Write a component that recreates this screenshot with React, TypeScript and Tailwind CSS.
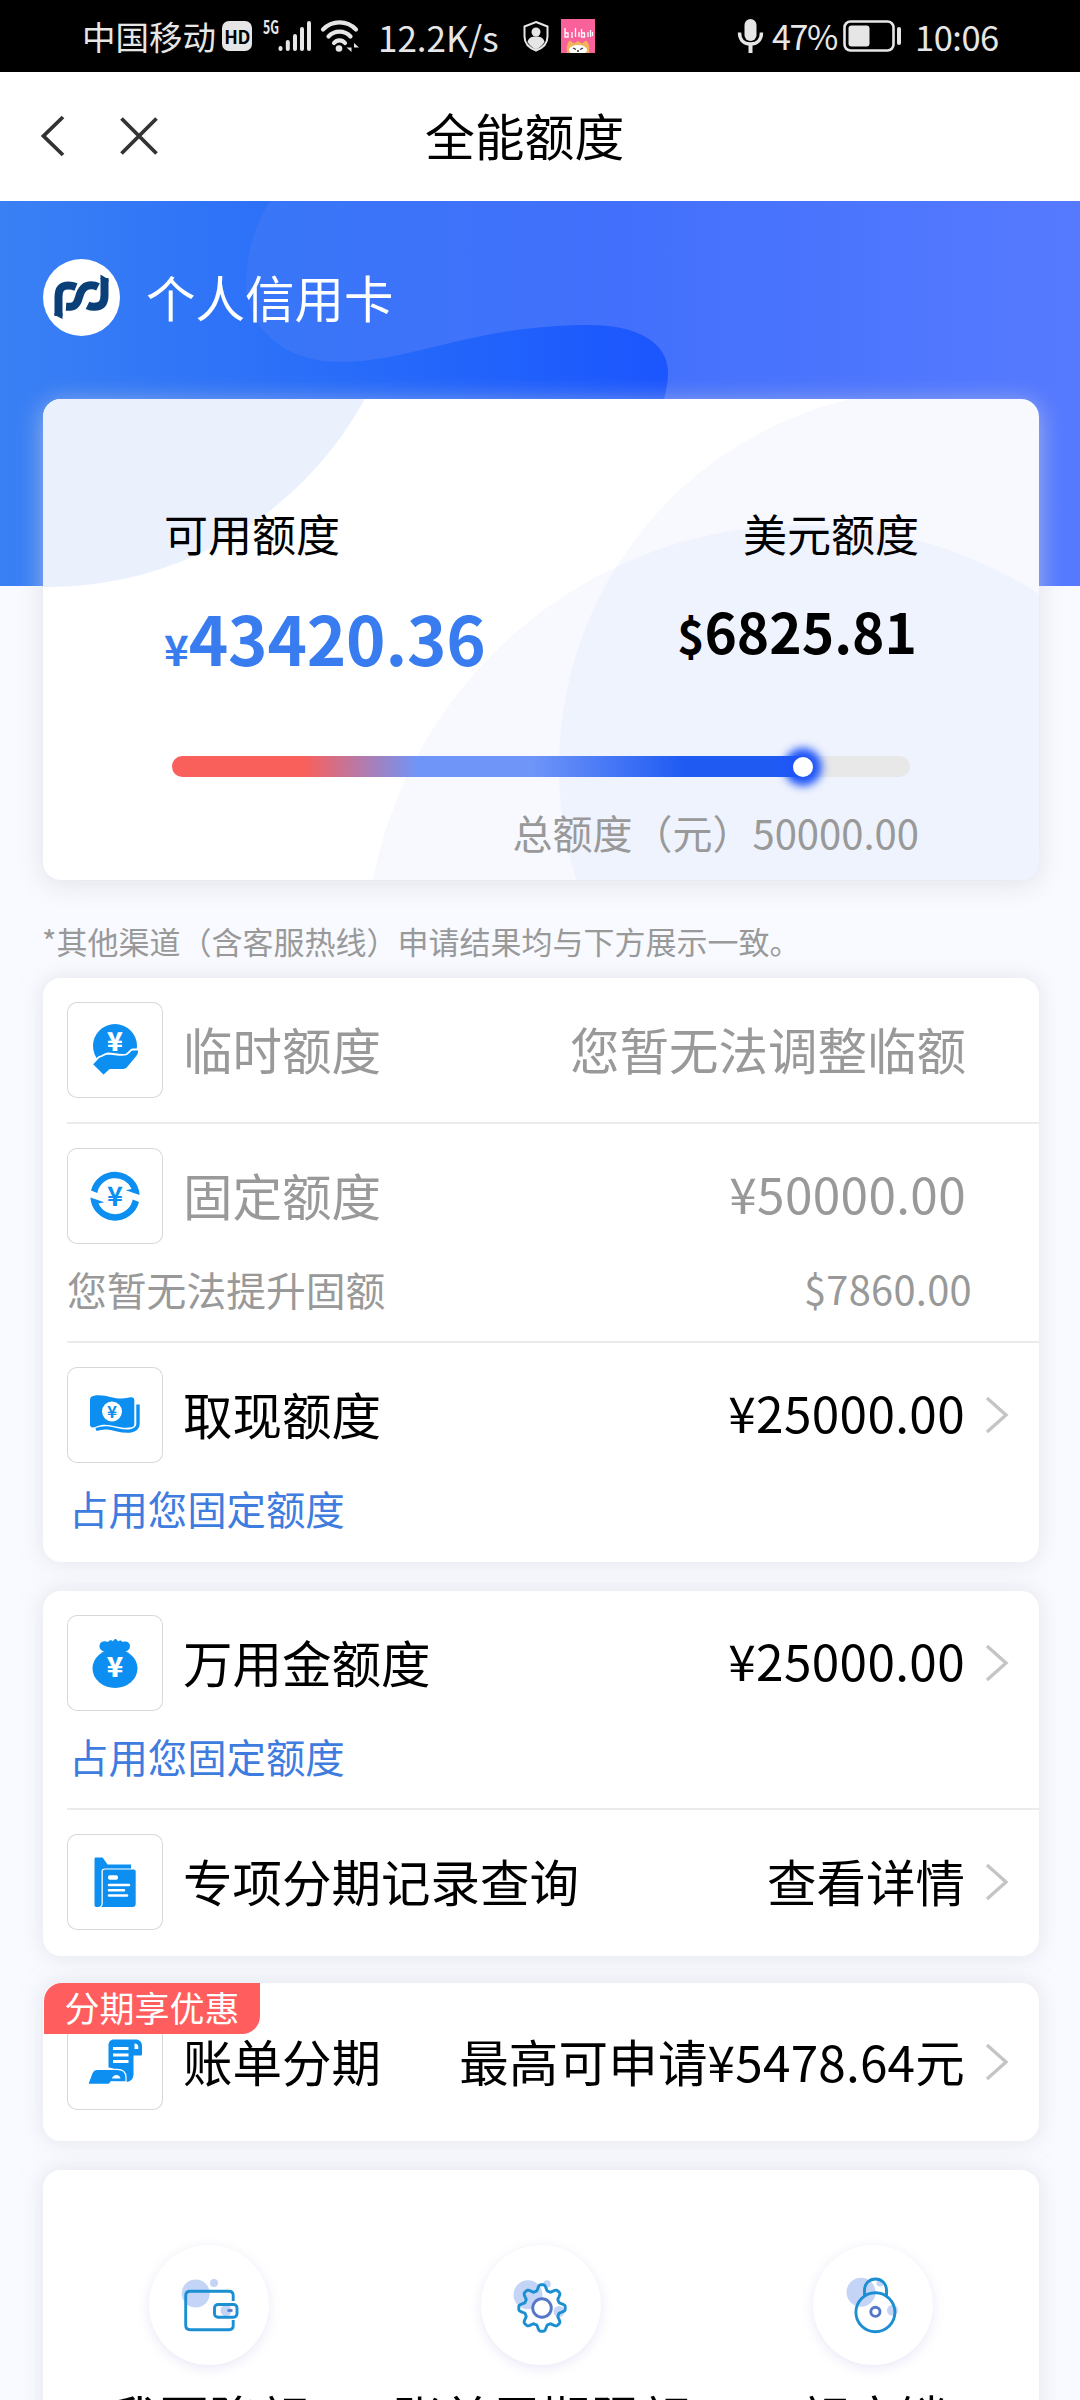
import React from 'react';

type Tone = 'muted' | 'normal';

interface RowProps {
  icon: React.ReactNode;
  label: string;
  value: string;
  tone?: Tone;
  arrow?: boolean;
  children?: React.ReactNode;
}

// --- Status bar ---
const StatusBar = () => (
  <div className="flex h-[72px] items-center bg-black text-[#e6e6e6]">
    <span className="ml-[82px] w-[137px] text-[33.5px] leading-none">中国移动</span>
    <span className="ml-[3px] flex h-[30px] w-[30px] items-center justify-center rounded-[7px] bg-[#e6e6e6] text-[18px] font-bold leading-none tracking-[-0.5px] text-black">
      HD
    </span>
    <svg className="ml-[10px]" width="100" height="36" viewBox="0 0 100 36" fill="none">
      <text x="1" y="16" fontSize="18" fontWeight="700" fill="#e6e6e6" textLength="16" lengthAdjust="spacingAndGlyphs">
        5G
      </text>
      <g stroke="#e6e6e6" strokeWidth="4" strokeLinecap="round">
        <path d="M18.5 31v-1M25.8 31v-7M33 31v-13M40 31V11M47 31V5" />
      </g>
      <g stroke="#e6e6e6" strokeWidth="4.2" strokeLinecap="round">
        <path d="M61 11.5c9-9.5 24-9.5 33 0M66.5 18.500c6-6.500 16-6.500 22 0M72 25c3-3.500 8-3.500 11 0" />
      </g>
      <circle cx="77" cy="30.5" r="3.3" fill="#e6e6e6" />
      <path d="M89.5 25v9l-5-4.500h5zM92 34v-9l5 4.500h-5z" fill="#e6e6e6" />
    </svg>
    <span className="ml-[16px] w-[122px] whitespace-nowrap text-[35px] leading-none">12.2K/s</span>
    <svg className="ml-[22px]" width="28" height="32" viewBox="0 0 28 32" fill="none">
      <path d="M14 2l11.5 4.5v10C25.5 23 21 28 14 30.5 7 28 2.5 23 2.5 16.5v-10z" stroke="#e6e6e6" strokeWidth="2" />
      <circle cx="14" cy="12" r="4.5" fill="#e6e6e6" />
      <path d="M5.5 22c1-4.500 4.500-5.500 8.500-5.500s7.500 1 8.500 5.500c-2 3.500-4.500 5.500-8.500 7.500-4-2-6.500-4-8.500-7.500z" fill="#e6e6e6" />
    </svg>
    <svg className="ml-[11px]" width="34" height="34" viewBox="0 0 34 34">
      <rect width="34" height="34" fill="#f9619b" />
      <path
        d="M4 9v9h3v-4H4M11 13v6M14.5 9v9M18 13v5M20.5 10v8h3v-4h-3M27 13v5M29.5 11v7M31.5 13v4"
        stroke="#fff"
        strokeWidth="1.3"
        fill="none"
      />
      <path d="M6 34c-1-6 0-10 3-12.500l4 3 4-2.500 4 2.500 4-3c3 2.500 4 6.500 3 12.500z" fill="#f3b45c" />
      <ellipse cx="17" cy="31" rx="9" ry="5" fill="#fff" />
      <path d="M12 29l3 1.5M22 29l-3 1.5M16 32h2" stroke="#333" strokeWidth="1.3" />
    </svg>
    <svg className="ml-[142px]" width="27" height="36" viewBox="0 0 27 36" fill="none">
      <rect x="7.5" y="1" width="12" height="22" rx="6" fill="#e6e6e6" />
      <path d="M2.5 14.5c0 8 5 11.500 11 11.500s11-3.500 11-11.500" stroke="#e6e6e6" strokeWidth="3.4" />
      <path d="M13.5 26v9" stroke="#e6e6e6" strokeWidth="4" />
    </svg>
    <span className="ml-[8px] w-[65px] whitespace-nowrap text-[34px] leading-none tracking-[-1.4px]">47%</span>
    <svg className="ml-[6px]" width="58" height="32" viewBox="0 0 58 32" fill="none">
      <rect x="1.5" y="1.5" width="49" height="29" rx="6" stroke="#e6e6e6" strokeWidth="2.6" />
      <rect x="5.5" y="5.5" width="21" height="21" rx="3" fill="#e6e6e6" />
      <rect x="54" y="7" width="4" height="18" rx="2" fill="#e6e6e6" />
    </svg>
    <span className="ml-[14px] whitespace-nowrap text-[34.5px] leading-none tracking-[-0.5px]">10:06</span>
  </div>
);

// --- Title bar ---
const TitleBar = () => (
  <div className="flex h-[129px] items-center bg-white pb-[2px]">
    <svg className="ml-[40px]" width="26" height="42" viewBox="0 0 26 42" fill="none">
      <path d="M23 2L3.5 21 23 40" stroke="#333" strokeWidth="3.8" />
    </svg>
    <svg className="ml-[53px]" width="40" height="40" viewBox="0 0 40 40" fill="none">
      <path d="M2.5 2.5l35 35M37.5 2.5l-35 35" stroke="#333" strokeWidth="3.8" />
    </svg>
    <h1 className="ml-[266px] pb-[2px] text-[49.8px] leading-none">全能额度</h1>
  </div>
);

const BankLogo = () => (
  <svg width="77" height="77" viewBox="0 0 77 77" fill="none">
    <circle cx="38.5" cy="38.5" r="38.5" fill="#fff" />
    <g stroke="#0b3f78" strokeWidth="8">
      <path d="M15.5 57V38c0-8 3-11.500 10-11.500 3.500 0 5 .5 7.500 1.500" />
      <path d="M23 47.800c8.500.5 11-2 13-9.500s5-12 12-12c3 0 5 .5 7 1.500" />
      <path d="M61.5 19v17c0 8-3 11.800-10 11.800-3 0-5-.5-7-1.500" />
    </g>
    <path d="M11.5 54v2l8 4v-6zM57.5 20v-4.5l8 5V23z" fill="#0b3f78" />
  </svg>
);

const Hero = () => (
  <div className="relative h-[385px] bg-linear-to-r from-[#3a80f4] via-[#1b55fe] via-62% to-[#1148ff]">
    <svg className="absolute inset-0" width="1080" height="385" viewBox="0 0 1080 385">
      <defs>
        <linearGradient id="blob" x1="246" y1="0" x2="1080" y2="0" gradientUnits="userSpaceOnUse">
          <stop offset="0" stopColor="#3876f7" />
          <stop offset="0.45" stopColor="#4270fc" />
          <stop offset="1" stopColor="#567aff" />
        </linearGradient>
      </defs>
      <path
        d="M270 0C252 28 246 58 246 84C248 128 285 161 341 161C410 161 475 124 589 124C638 124 668 142 668 171C668 185 665 192 663 205L640 385H1080V0Z"
        fill="url(#blob)"
      />
    </svg>
    <div className="relative flex items-center gap-[26px] pl-[43px] pt-[58px] text-white">
      <BankLogo />
      <span className="pb-[2px] text-[49.5px] leading-none">个人信用卡</span>
    </div>
  </div>
);

// --- Available credit card ---
const CreditCard = () => {
  const total = 50000;
  const available = 43420.36;
  const fill = (available / total) * 98.5;

  return (
    <div className="relative ml-[43px] -mt-[187px] h-[481px] w-[996px] rounded-[18px] bg-white shadow-[0_4px_26px_rgba(212,214,220,0.65)]">
      <svg className="absolute inset-0 rounded-[18px]" width="996" height="481" viewBox="43 399 996 481">
        <circle cx="48" cy="226" r="361" fill="#eaf1fd" />
        <circle cx="803" cy="963" r="438" fill="#4a70f0" fillOpacity="0.045" />
        <circle cx="937" cy="767" r="378" fill="#4a70f0" fillOpacity="0.045" />
      </svg>
      <div className="relative pl-[121px] pr-[120px]">
        <div className="flex justify-between pt-[110px] text-[44px] leading-[48px]">
          <span>可用额度</span>
          <span>美元额度</span>
        </div>
        <div className="mt-[32px] flex h-[80px] items-start justify-between font-bold">
          <div className="flex items-baseline pt-[14px] text-[#387cf0]">
            <span className="text-[42px] leading-none">¥</span>
            <span className="text-[67px] leading-none tracking-[-0.2px]">43420.36</span>
          </div>
          <div className="flex items-baseline pr-[2px] pt-[14px]">
            <span className="text-[46px] leading-none">$</span>
            <span className="text-[55px] leading-none">6825.81</span>
          </div>
        </div>
        <div className="ml-[8px] mt-[87px] flex h-[21px] w-[738px] items-center rounded-full bg-[#e8e8e8]">
          <div
            className="flex h-[21px] items-center justify-end rounded-l-full bg-[linear-gradient(90deg,#f9605c_0%,#f9605c_21%,#6f95f8_39%,#6f95f8_57%,#1f5bf3_81%,#1f5bf3_100%)]"
            style={{ width: `${fill}%` }}
          >
            <span className="-mr-[10px] h-[20px] w-[20px] shrink-0 rounded-full bg-white shadow-[0_0_9px_9px_#1f55f8]" />
          </div>
        </div>
        <div className="mt-[33px] text-right text-[40px] leading-[44px] text-[#999]">总额度（元）50000.00</div>
      </div>
    </div>
  );
};

// --- Row icons ---
const BLUE = '#0c8ff0';

const HandIcon = () => (
  <svg width="96" height="96" viewBox="0 0 96 96">
    <circle cx="48" cy="44" r="22" fill={BLUE} />
    <text x="48" y="48.5" fontSize="26" fontWeight="900" fill="#fff" textAnchor="middle">¥</text>
    <path
      d="M24.5 62c3-1 4.500-5 7.500-7 3-.5 5-3 9-3.500 6 0 12 2.500 18 1 3-1.500 4-4.500 6.500-5h6.500c.5 3-.5 5-2 7L60 66.500c-1 1-2 1.300-3.500 1.300H43L36.500 74z"
      fill={BLUE}
      stroke="#fff"
      strokeWidth="1.8"
    />
  </svg>
);

const CycleIcon = () => {
  const half = 'M24 42.4A24.7 24.7 0 0 1 72.6 47L58.8 42.2l5.7-1.2A18 18 0 0 0 30.3 45z';
  return (
    <svg width="96" height="96" viewBox="0 0 96 96" fill={BLUE}>
      <path d={half} />
      <path d={half} transform="rotate(180 48 48.2)" />
      <text x="48" y="57.5" fontSize="27" fontWeight="700" textAnchor="middle">¥</text>
    </svg>
  );
};

const CashIcon = () => (
  <svg width="96" height="96" viewBox="0 0 96 96" fill="none">
    <path
      d="M23 33c0-3 1.500-4 4-4.300 11-2 19 3.500 28 2.800 4 0 8-2 10.500-1 1.500.5 1.800 1.500 1.800 3V57c0 2-1 3-3 3.300-12 2-20-4-30-2.300-4 .7-7 3-9.500 2.300-1.500-.5-1.800-1.500-1.800-3z"
      fill={BLUE}
    />
    <circle cx="45" cy="44.5" r="10" fill="#fff" />
    <text x="45" y="50.5" fontSize="17" fontWeight="700" fill={BLUE} textAnchor="middle">¥</text>
    <path d="M29 62.500c14-5 22 3 34 1.500 5-1 8-2.500 8-7V37.500" stroke={BLUE} strokeWidth="3.4" />
  </svg>
);

const BagIcon = () => (
  <svg width="96" height="96" viewBox="0 0 96 96" fill={BLUE}>
    <path d="M40 37c-5 0-8-3-7.500-6.500.5-4 5-5 8.500-3.500 1.500-2.500 4-2 5-.5 1-3.500 4-3.500 5 0 1.500-1.500 3.500-1.500 4.500.5 4-1.500 7.500.5 7.500 4S60 37 56 37l-3 4H43z" />
    <ellipse cx="48" cy="53.5" rx="22.5" ry="19.5" />
    <text x="48" y="62" fontSize="27" fontWeight="900" fill="#fff" textAnchor="middle">¥</text>
  </svg>
);

const FolderIcon = () => (
  <svg width="96" height="96" viewBox="0 0 96 96" fill={BLUE}>
    <path d="M27.5 25c0-1 .5-1.500 1.500-1.500h5.500c1 0 1.500.5 2 1.200l4 5.800H64v4H38c-2.500 0-3.500 1-3.500 3V70c0 1.500-1.500 3-3.500 3h-1.500c-1.300 0-2-.7-2-2z" />
    <path d="M38 35.500h28.500c1.500 0 2.200.7 2.200 2v32c0 2.500-1 3.500-3.200 3.500H34c1.300-1 1.800-2 1.800-4V37.500c0-1.300.7-2 2.200-2z" />
    <rect x="41" y="41.3" width="10" height="4.4" rx="1.8" fill="#fff" />
    <path d="M42 51h20M42 56.300h15M42 61.500h18" stroke="#fff" strokeWidth="2.6" strokeLinecap="round" />
  </svg>
);

const ScrollIcon = () => (
  <svg width="96" height="96" viewBox="0 0 96 96" fill={BLUE}>
    <path d="M47 25.500h21.500c4 0 6.500 2.500 6.500 6.500V40c0 1-.5 1.500-1.500 1.500H66.500V60c0 5-3 8-8 8h-9l1-6c-1-5-3-8-9-8.500V31.500c0-3.500 2-6 5.500-6z" />
    <path d="M67.5 29.500c2.500 0 3.800 1.300 3.800 3.500v2h-3.800z" fill="#fff" />
    <path d="M46 34.500h15.500M46 41h15.500M46 47.500h15.500" stroke="#fff" strokeWidth="3" />
    <path d="M21.2 69l3.600-9.500c1-3 2.700-4.200 5.500-4.200H50c6 0 9 3 9 8v4.500H44l-1 1.500c-.5.7-1 1-2 1H22c-.8 0-1-.5-.8-1.300z" stroke="#fff" strokeWidth="1.2" />
    <path d="M45 64.500c1-4 7-5 8.500 0z" fill="#fff" />
  </svg>
);

const Chevron = () => (
  <svg className="ml-[20px] mr-[30px]" width="24" height="40" viewBox="0 0 24 40" fill="none">
    <path d="M2 3l19 17L2 37" stroke="#c5c5c8" strokeWidth="3.4" />
  </svg>
);

const Panel = ({ children, className = '' }: { children: React.ReactNode; className?: string }) => (
  <section
    className={`relative ml-[43px] w-[996px] rounded-[18px] bg-white shadow-[0_0_20px_rgba(205,207,213,0.5)] ${className}`}
  >
    {children}
  </section>
);

const Row = ({ icon, label, value, tone = 'normal', arrow = false, children }: RowProps) => (
  <div className={tone === 'muted' ? 'pl-[24px] pt-[24px] text-[#999]' : 'pl-[24px] pt-[24px] text-black'}>
    <div className="flex h-[96px] items-center">
      <div className="h-[96px] w-[96px] shrink-0 overflow-hidden rounded-[10px] shadow-[inset_0_0_0_1px_#d8d8d8]">{icon}</div>
      <span className="ml-[20px] whitespace-nowrap pb-[3px] text-[49.5px] leading-none">{label}</span>
      <span
        className={`ml-auto whitespace-nowrap text-[49.5px] leading-none ${
          value.startsWith('¥') ? 'pb-[6px] tracking-[0.35px]' : 'pb-[3px]'
        } ${value.endsWith('元') ? 'tracking-[0.2px]' : ''} ${arrow ? '' : 'mr-[73px]'}`}
      >
        {value}
      </span>
      {arrow && <Chevron />}
    </div>
    {children}
  </div>
);

const Divider = () => <div className="ml-[24px] h-[2px] bg-[#ebebeb]" />;

const OccupyNote = () => (
  <div className="ml-[2px] flex h-[97px] items-center pb-[7px] text-[39.4px] leading-none text-[#3f7cdf]">占用您固定额度</div>
);

// --- Bottom shortcuts ---
const LINE = '#1b8fd2';
const HAZE = '#c3d4f7';

const gearPath = () => {
  const points: string[] = [];
  for (let i = 0; i < 144; i++) {
    const a = (i / 144) * Math.PI * 2;
    const wave = Math.max(-1, Math.min(1, Math.cos(a * 8) * 1.5));
    const r = 20.5 + wave * 2.7;
    points.push(`${(61 + r * Math.sin(a)).toFixed(2)} ${(63 - r * Math.cos(a)).toFixed(2)}`);
  }
  return `M${points.join('L')}Z`;
};

const WalletIcon = () => (
  <svg width="120" height="120" viewBox="0 0 120 120" fill="none">
    <circle cx="46.7" cy="48.5" r="14" fill={HAZE} />
    <circle cx="65" cy="38" r="4" fill={HAZE} />
    <circle cx="77" cy="65.5" r="5.5" fill={HAZE} />
    <path d="M84.2 56V50.500c0-2.800-1.400-4.200-4.200-4.200H41.200c-3 0-4.500 1.500-4.500 4.500v29.500c0 3 1.500 4.500 4.500 4.500H80c2.800 0 4.200-1.400 4.200-4.200V75" stroke={LINE} strokeWidth="2.9" />
    <rect x="65.5" y="59.5" width="22.5" height="12.8" rx="3.5" stroke={LINE} strokeWidth="2.9" />
    <path d="M78.5 65.500h5" stroke="#5577c8" strokeWidth="2.6" />
  </svg>
);

const GearIcon = () => (
  <svg width="120" height="120" viewBox="0 0 120 120" fill="none">
    <circle cx="47" cy="49.7" r="14.5" fill={HAZE} />
    <circle cx="66" cy="39" r="3.8" fill={HAZE} />
    <circle cx="78" cy="66.5" r="5.5" fill={HAZE} />
    <path d={gearPath()} stroke={LINE} strokeWidth="2.9" strokeLinejoin="round" />
    <circle cx="61" cy="63" r="9.3" fill="#fff" stroke="#5577c8" strokeWidth="2.9" />
  </svg>
);

const LockIcon = () => (
  <svg width="120" height="120" viewBox="0 0 120 120" fill="none">
    <circle cx="48" cy="47.3" r="14.5" fill={HAZE} />
    <circle cx="67" cy="38" r="3.5" fill={HAZE} />
    <circle cx="79.5" cy="65.3" r="5.5" fill={HAZE} />
    <path d="M51.5 51V45c0-6.500 5-11 11-11s11 4.500 11 11v6" stroke={LINE} strokeWidth="2.9" />
    <circle cx="62.4" cy="67.3" r="19.5" stroke={LINE} strokeWidth="2.9" />
    <circle cx="62.4" cy="66.8" r="4.6" stroke="#5577c8" strokeWidth="2.9" />
  </svg>
);

const shortcuts = [
  { label: '我要降额', icon: <WalletIcon /> },
  { label: '账单周期限额', icon: <GearIcon /> },
  { label: '额度锁', icon: <LockIcon /> },
];

const App = () => {
  return (
    <div
      lang="zh-CN"
      className="h-[2400px] w-[1080px] overflow-hidden bg-[#f8faff] font-['Noto_Sans_CJK_SC','Noto_Sans',sans-serif] text-black"
    >
      <StatusBar />
      <TitleBar />
      <Hero />
      <CreditCard />

      <p className="ml-[42px] mt-[43px] h-[55px] whitespace-nowrap text-[31px] leading-[36px] text-[#999]">
        *其他渠道（含客服热线）申请结果均与下方展示一致。
      </p>

      <Panel className="h-[584px]">
        <Row icon={<HandIcon />} label="临时额度" value="您暂无法调整临额" tone="muted">
          <div className="h-[24px]" />
        </Row>
        <Divider />
        <Row icon={<CycleIcon />} label="固定额度" value="¥50000.00" tone="muted">
          <div className="flex h-[97px] items-center justify-between pb-[7px] pr-[67px] text-[39.8px] leading-none">
            <span>您暂无法提升固额</span>
            <span className="pb-[2px] tracking-[0.3px]">$7860.00</span>
          </div>
        </Row>
        <Divider />
        <Row icon={<CashIcon />} label="取现额度" value="¥25000.00" arrow>
          <OccupyNote />
        </Row>
      </Panel>

      <Panel className="mt-[29px] h-[365px]">
        <Row icon={<BagIcon />} label="万用金额度" value="¥25000.00" arrow>
          <OccupyNote />
        </Row>
        <Divider />
        <Row icon={<FolderIcon />} label="专项分期记录查询" value="查看详情" arrow />
      </Panel>

      <Panel className="mt-[27px] h-[158px] pt-[7px]">
        <Row icon={<ScrollIcon />} label="账单分期" value="最高可申请¥5478.64元" arrow />
        <span className="absolute left-[1px] top-0 flex h-[51px] w-[216px] items-center justify-center rounded-br-[18px] rounded-tl-[18px] bg-[#ff5d5e] pb-[5px] text-[35px] leading-none text-white">
          分期享优惠
        </span>
      </Panel>

      <Panel className="mt-[29px] grid h-[400px] grid-cols-3 pt-[75px]">
        {shortcuts.map((item) => (
          <div key={item.label} className="flex flex-col items-center">
            <div className="h-[120px] w-[120px] rounded-full bg-white shadow-[0_3px_12px_rgba(150,150,220,0.22)]">{item.icon}</div>
            <span className="mt-[27px] whitespace-nowrap text-[49.5px] leading-[50px]">{item.label}</span>
          </div>
        ))}
      </Panel>
    </div>
  );
};

export default App;
